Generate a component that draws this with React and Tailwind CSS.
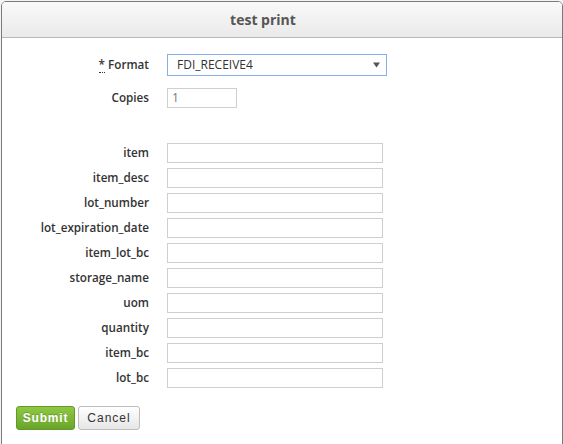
export default function App() {
  const fields = [
    "item",
    "item_desc",
    "lot_number",
    "lot_expiration_date",
    "item_lot_bc",
    "storage_name",
    "uom",
    "quantity",
    "item_bc",
    "lot_bc",
  ];

  return (
    <div className="w-[563px] h-[444px] overflow-hidden bg-[#f4f4f4] font-['Open_Sans',sans-serif]">
      <div className="ml-[1px] mt-[1px] w-[562px] h-[460px] bg-white border border-[#7a7a7a] rounded-t-[5px] overflow-hidden">
        {/* Header */}
        <div className="h-[36px] border-b border-[#b8b8b8] bg-gradient-to-b from-[#f9f9f9] to-[#eaeaea] flex items-center justify-center pr-[38px]">
          <span className="text-[14px] font-bold text-[#555] leading-none">
            test print
          </span>
        </div>

        {/* Body */}
        <div className="pl-[10px] pt-[16px]">
          <div className="flex items-center h-[22px]">
            <label className="w-[137px] text-right text-[11.7px] font-semibold text-[#333]">
              <abbr className="no-underline border-b border-dotted border-[#333]" title="required">
                *
              </abbr>{" "}
              Format
            </label>
            <div className="ml-[18px] w-[220px] h-[22px] border border-[#86aee8] bg-white flex items-center justify-between pl-[9px] pr-[6px]">
              <span className="text-[12px] text-[#333]">FDI_RECEIVE4</span>
              <svg width="7" height="6" viewBox="0 0 7 6">
                <path d="M0 0.5 H7 L3.5 5.5 Z" fill="#555" />
              </svg>
            </div>
          </div>

          <div className="flex items-center h-[20px] mt-[12px]">
            <label className="w-[137px] text-right text-[11.7px] font-semibold text-[#333]">
              Copies
            </label>
            <div className="ml-[18px] w-[70px] h-[20px] border border-[#cfcfcf] flex items-center pl-[4px]">
              <span className="text-[12px] text-[#777]">1</span>
            </div>
          </div>

          <div className="mt-[35px] flex flex-col gap-[5px]">
            {fields.map((f) => (
              <div key={f} className="flex items-center h-[20px]">
                <label className="w-[137px] text-right text-[11.7px] font-semibold text-[#333]">
                  {f}
                </label>
                <div className="ml-[18px] w-[216px] h-[20px] border border-[#cfcfcf] bg-white" />
              </div>
            ))}
          </div>

          <div className="mt-[18px] flex gap-[3px] pl-[4px] font-['Liberation_Sans',sans-serif]">
            <button className="w-[59px] h-[24px] rounded-[3px] border border-[#5f9c25] bg-gradient-to-b from-[#8fc843] to-[#6aa52b] text-white text-[12px] font-bold tracking-[0.8px] [text-shadow:0_-1px_0_rgba(0,0,0,0.2)]">
              Submit
            </button>
            <button className="w-[62px] h-[24px] rounded-[3px] border border-[#bdbdbd] bg-gradient-to-b from-[#ffffff] to-[#e6e6e6] text-[#333] text-[12px] tracking-[1px]">
              Cancel
            </button>
          </div>
        </div>
      </div>
    </div>
  );
}
